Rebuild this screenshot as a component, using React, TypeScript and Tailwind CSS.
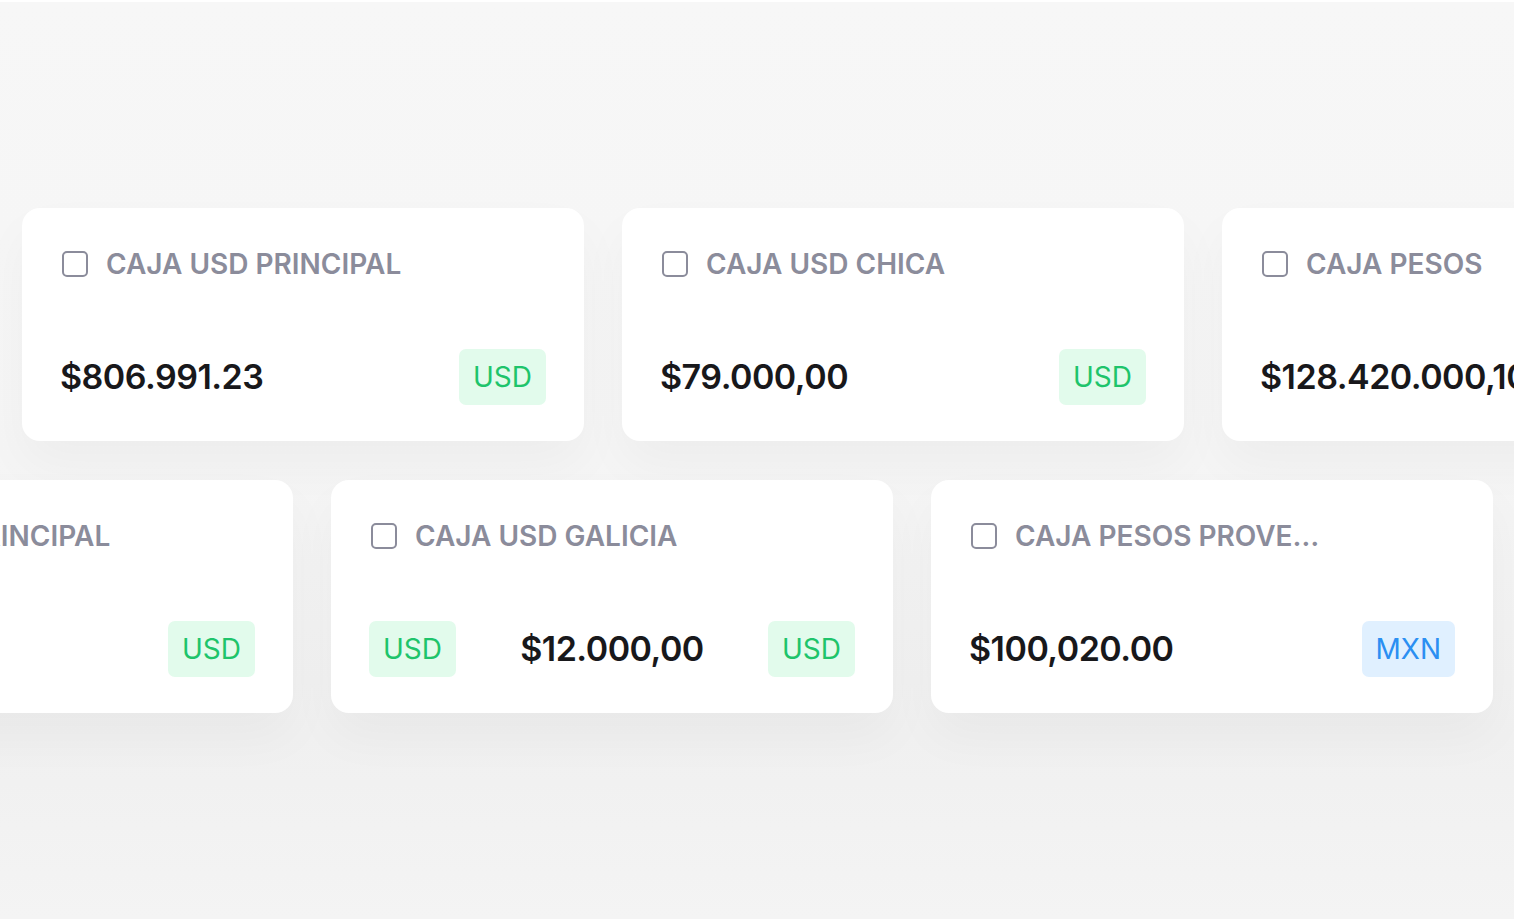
import React from 'react';

type Card = {
  title: string;
  amount: string;
  currency: 'USD' | 'MXN';
  leftBadge?: boolean;
};

const topRow: Card[] = [
  { title: 'CAJA USD PRINCIPAL', amount: '$806.991.23', currency: 'USD' },
  { title: 'CAJA USD CHICA', amount: '$79.000,00', currency: 'USD' },
  { title: 'CAJA PESOS', amount: '$128.420.000,10', currency: 'MXN' },
];

const bottomRow: Card[] = [
  { title: 'CAJA USD PRINCIPAL', amount: '$806.991.23', currency: 'USD' },
  { title: 'CAJA USD GALICIA', amount: '$12.000,00', currency: 'USD', leftBadge: true },
  { title: 'CAJA PESOS PROVEEDORES', amount: '$100,020.00', currency: 'MXN' },
];

function Badge({ currency }: { currency: 'USD' | 'MXN' }) {
  const tone =
    currency === 'USD'
      ? 'bg-[#e2fbec] text-[#1ec46b]'
      : 'bg-[#e0f0ff] text-[#2b8ff2]';
  return (
    <span
      className={`flex h-[56px] shrink-0 items-center justify-center rounded-[7px] px-[14px] text-[28px] leading-none ${tone}`}
    >
      {currency}
    </span>
  );
}

function CashCard({ card }: { card: Card }) {
  return (
    <div className="flex h-[233px] w-[562px] shrink-0 flex-col rounded-[18px] bg-white px-[38px] pt-[38px] shadow-[0_24px_50px_rgba(0,0,0,0.035)]">
      <div className="flex items-center gap-[18px] pl-[2px]">
        <span className="h-[26px] w-[26px] shrink-0 rounded-[5px] border-[2.5px] border-[#8b8c9b]" />
        <span className="max-w-[316px] overflow-hidden text-ellipsis whitespace-nowrap text-[28px] font-semibold leading-[36px] tracking-[0em] text-[#8b8c9b]">
          {card.title}
        </span>
      </div>
      <div className="mt-[67px] flex items-center justify-between">
        {card.leftBadge && <Badge currency={card.currency} />}
        <span className="whitespace-nowrap text-[34px] font-semibold leading-none tracking-[-0.015em] text-[#18181b]">
          {card.amount}
        </span>
        <Badge currency={card.currency} />
      </div>
    </div>
  );
}

export default function App() {
  return (
    <div
      className="h-[919px] w-full overflow-hidden border-t-2 border-white bg-[linear-gradient(to_bottom,#f7f7f7_0%,#f5f5f5_50%,#f0f0f0_80%,#f4f4f4_100%)]"
      style={{ fontFamily: 'Inter, "Noto Sans", sans-serif' }}
    >
      <div className="flex flex-col gap-[39px] pt-[206px]">
        <div className="ml-[22px] flex gap-[38px]">
          {topRow.map((c, i) => (
            <CashCard key={i} card={c} />
          ))}
        </div>
        <div className="ml-[-269px] flex gap-[38px]">
          {bottomRow.map((c, i) => (
            <CashCard key={i} card={c} />
          ))}
        </div>
      </div>
    </div>
  );
}
